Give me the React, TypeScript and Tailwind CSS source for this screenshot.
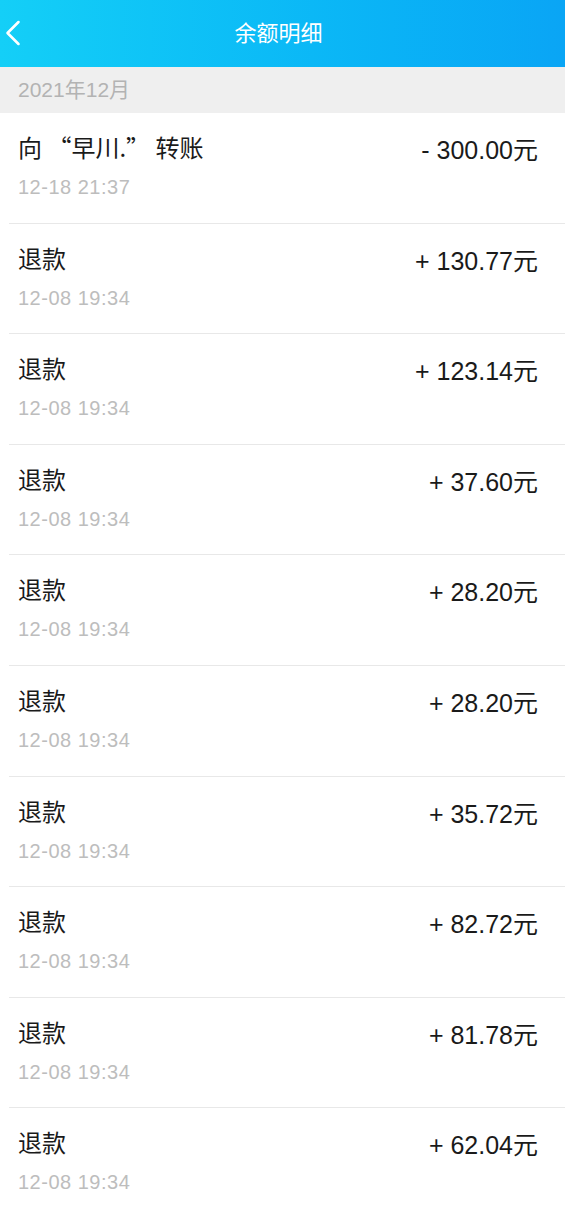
import { ChevronLeft } from "lucide-react";

interface Record {
    title: string;
    time: string;
    amount: string;
}

const records: Record[] = [
    { title: "向 “早川.” 转账", time: "12-18 21:37", amount: "- 300.00元" },
    { title: "退款", time: "12-08 19:34", amount: "+ 130.77元" },
    { title: "退款", time: "12-08 19:34", amount: "+ 123.14元" },
    { title: "退款", time: "12-08 19:34", amount: "+ 37.60元" },
    { title: "退款", time: "12-08 19:34", amount: "+ 28.20元" },
    { title: "退款", time: "12-08 19:34", amount: "+ 28.20元" },
    { title: "退款", time: "12-08 19:34", amount: "+ 35.72元" },
    { title: "退款", time: "12-08 19:34", amount: "+ 82.72元" },
    { title: "退款", time: "12-08 19:34", amount: "+ 81.78元" },
    { title: "退款", time: "12-08 19:34", amount: "+ 62.04元" },
];

export default function App() {
    return (
        <div className="w-[565px] h-[1215px] overflow-hidden bg-white font-['Liberation_Sans','Noto_Sans_CJK_SC',sans-serif]">
            {/* header */}
            <div className="relative h-[67px] flex items-center justify-center bg-gradient-to-r from-[#14cff7] to-[#0aa5f5]">
                <ChevronLeft size={44} strokeWidth={1.4} className="absolute left-[-9px] top-[11px] text-white" />
                <span className="text-white text-[22px] mr-[8px]">余额明细</span>
            </div>

            {/* month */}
            <div className="h-[46px] flex items-center pl-[18px] bg-[#efefef] text-[#b3b3b3] text-[21px]">
                2021年12月
            </div>

            {/* list */}
            <div className="pl-[9px]">
                {records.map((r, i) => (
                    <div key={i} className="h-[110.6px] border-b border-[#e8e8e8] flex justify-between pl-[9px] pr-[27px] pt-[22px]">
                        <div className="flex flex-col">
                            <span className="-mt-[3px] text-[24px] leading-[30px] text-[#1a1a1a] font-['Noto_Sans_CJK_SC',sans-serif]">{r.title}</span>
                            <span className="mt-[13px] text-[20px] leading-[24px] tracking-[0.5px] text-[#bdbdbd]">{r.time}</span>
                        </div>
                        <span className="text-[25px] leading-[30px] text-[#1a1a1a]">{r.amount}</span>
                    </div>
                ))}
            </div>
        </div>
    );
}
